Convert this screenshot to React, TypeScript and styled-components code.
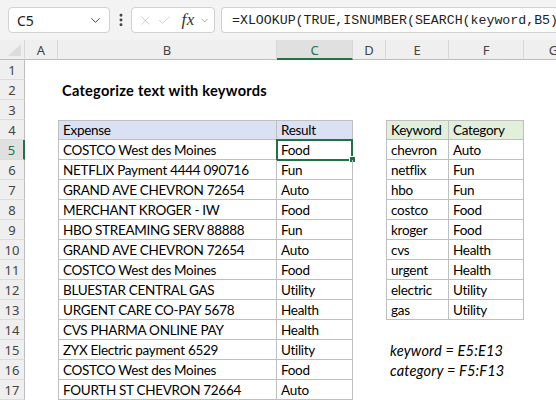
import React from "react";
import styled, { createGlobalStyle, css } from "styled-components";
import { ChevronDown, EllipsisVertical, X, Check } from "lucide-react";

const GlobalStyle = createGlobalStyle`
  html, body {
    margin: 0;
    padding: 0;
    background: #fff;
    overflow: hidden;
  }
  body {
    font-family: "Liberation Sans", Arial, sans-serif;
  }
`;

const GREEN = "#217346";

const Page = styled.div`
  width: 556px;
  height: 400px;
  overflow: hidden;
  display: flex;
  flex-direction: column;
  background: #fff;
`;

const Toolbar = styled.div`
  flex: none;
  height: 40px;
  box-sizing: border-box;
  padding: 7px 0 0 8px;
  display: flex;
  align-items: flex-start;
  background: #f3f3f3;
  overflow: hidden;
`;

const Box = styled.div<{ $width?: number }>`
  flex: none;
  height: 26px;
  box-sizing: border-box;
  width: ${(p) => (p.$width ? `${p.$width}px` : "auto")};
  background: #fff;
  border: 1px solid #d1d1d1;
  border-radius: 4px;
  display: flex;
  align-items: center;
`;

const NameBox = styled(Box)`
  padding: 0 6px 0 8px;
  justify-content: space-between;
  font-family: "Noto Sans", sans-serif;
  font-size: 14px;
  color: #222;
`;

const Dots = styled.div`
  flex: none;
  width: 21px;
  height: 26px;
  display: flex;
  align-items: center;
  justify-content: center;
  color: #444;
`;

const FxBox = styled(Box)`
  padding: 0 4px 0 6px;
  gap: 4px;
  color: #c4c4c4;
`;

const Fx = styled.span`
  font-family: "Liberation Serif", serif;
  font-style: italic;
  font-size: 17px;
  color: #333;
  margin-left: 6px;
  letter-spacing: 0.5px;
`;

const FormulaBox = styled(Box)`
  margin-left: 6px;
  flex: 1 0 auto;
  min-width: 400px;
  padding-left: 10px;
  font-family: "Liberation Mono", monospace;
  font-size: 13.25px;
  color: #222;
  white-space: nowrap;
  border-right: none;
  border-top-right-radius: 0;
  border-bottom-right-radius: 0;
`;

const Sheet = styled.div`
  display: grid;
  grid-template-columns: 25px 33px 219px 76px 33px 63px 75px 60px;
  grid-auto-rows: 20px;
`;

const Corner = styled.div`
  background: #efefef;
  border-bottom: 1px solid #bdbdbd;
  border-right: 1px solid #d8d8d8;
  box-sizing: border-box;
  position: relative;
  &::after {
    content: "";
    position: absolute;
    right: 3px;
    bottom: 3px;
    width: 0;
    height: 0;
    border-left: 13px solid transparent;
    border-bottom: 12px solid #dcdcdc;
  }
`;

const ColHead = styled.div<{ $active?: boolean }>`
  box-sizing: border-box;
  background: ${(p) => (p.$active ? "#e0e0e0" : "#efefef")};
  border-right: 1px solid #d8d8d8;
  border-bottom: ${(p) => (p.$active ? `2px solid ${GREEN}` : "1px solid #bdbdbd")};
  display: flex;
  align-items: center;
  justify-content: center;
  font-family: "Noto Sans", sans-serif;
  font-size: 13px;
  color: ${(p) => (p.$active ? GREEN : "#444")};
  padding-top: ${(p) => (p.$active ? "1px" : "0")};
`;

const RowHead = styled.div<{ $active?: boolean }>`
  box-sizing: border-box;
  background: ${(p) => (p.$active ? "#e0e0e0" : "#efefef")};
  border-right: ${(p) => (p.$active ? `2px solid ${GREEN}` : "1px solid #bdbdbd")};
  border-bottom: 1px solid #dcdcdc;
  display: flex;
  align-items: center;
  justify-content: center;
  font-family: "Noto Sans", sans-serif;
  font-size: 13px;
  color: ${(p) => (p.$active ? GREEN : "#444")};
`;

type Fill = "blue" | "green";

const Cell = styled.div<{
  $box?: boolean;
  $top?: boolean;
  $left?: boolean;
  $fill?: Fill;
  $bold?: boolean;
  $italic?: boolean;
  $selected?: boolean;
}>`
  box-sizing: border-box;
  position: relative;
  display: flex;
  align-items: flex-end;
  padding: 0 0 1px 4px;
  font-family: Lato, "Liberation Sans", sans-serif;
  font-size: 13.5px;
  letter-spacing: -0.3px;
  color: #000;
  white-space: nowrap;
  overflow: visible;
  background: ${(p) =>
    p.$fill === "blue" ? "#d9e1f2" : p.$fill === "green" ? "#e2efda" : "transparent"};
  ${(p) =>
    p.$bold &&
    css`
      font-weight: 700;
      font-size: 14.6px;
      letter-spacing: 0.25px;
    `}
  ${(p) =>
    p.$italic &&
    css`
      font-style: italic;
      font-size: 14.6px;
      letter-spacing: 0.15px;
    `}
  ${(p) =>
    p.$box &&
    css`
      border-right: 1px solid #bfbfbf;
      border-bottom: 1px solid #bfbfbf;
    `}
  ${(p) => p.$top && "border-top: 1px solid #bfbfbf;"}
  ${(p) => p.$left && "border-left: 1px solid #bfbfbf;"}
  ${(p) =>
    p.$selected &&
    css`
      &::before {
        content: "";
        position: absolute;
        left: -1px;
        top: -1px;
        right: -1px;
        bottom: -2px;
        border: 2px solid ${GREEN};
      }
      &::after {
        content: "";
        position: absolute;
        right: -4px;
        bottom: -4px;
        width: 5px;
        height: 5px;
        background: ${GREEN};
        border: 1px solid #fff;
      }
    `}
`;

const expenses: [string, string][] = [
  ["COSTCO West des Moines", "Food"],
  ["NETFLIX Payment 4444 090716", "Fun"],
  ["GRAND AVE CHEVRON 72654", "Auto"],
  ["MERCHANT KROGER - IW", "Food"],
  ["HBO STREAMING SERV 88888", "Fun"],
  ["GRAND AVE CHEVRON 72654", "Auto"],
  ["COSTCO West des Moines", "Food"],
  ["BLUESTAR CENTRAL GAS", "Utility"],
  ["URGENT CARE CO-PAY 5678", "Health"],
  ["CVS PHARMA ONLINE PAY", "Health"],
  ["ZYX Electric payment 6529", "Utility"],
  ["COSTCO West des Moines", "Food"],
  ["FOURTH ST CHEVRON 72664", "Auto"],
];

const keywords: [string, string][] = [
  ["chevron", "Auto"],
  ["netflix", "Fun"],
  ["hbo", "Fun"],
  ["costco", "Food"],
  ["kroger", "Food"],
  ["cvs", "Health"],
  ["urgent", "Health"],
  ["electric", "Utility"],
  ["gas", "Utility"],
];

const names: Record<number, string> = {
  15: "keyword = E5:E13",
  16: "category = F5:F13",
};

const columns = ["A", "B", "C", "D", "E", "F", "G"];

const renderRow = (r: number) => {
  const exp = r >= 5 ? expenses[r - 5] : undefined;
  const kw = r >= 5 ? keywords[r - 5] : undefined;
  const isHead = r === 4;
  const inMain = isHead || !!exp;
  const inKw = isHead || !!kw;

  return (
    <React.Fragment key={r}>
      <RowHead $active={r === 5}>{r}</RowHead>
      <Cell />
      {r === 2 ? (
        <Cell $bold>Categorize text with keywords</Cell>
      ) : (
        <Cell $box={inMain} $top={isHead} $left={inMain} $fill={isHead ? "blue" : undefined}>
          {isHead ? "Expense" : exp?.[0]}
        </Cell>
      )}
      <Cell $box={inMain} $top={isHead} $fill={isHead ? "blue" : undefined} $selected={r === 5}>
        {isHead ? "Result" : exp?.[1]}
      </Cell>
      <Cell />
      {names[r] ? (
        <Cell $italic>{names[r]}</Cell>
      ) : (
        <Cell $box={inKw} $top={isHead} $left={inKw} $fill={isHead ? "green" : undefined}>
          {isHead ? "Keyword" : kw?.[0]}
        </Cell>
      )}
      <Cell $box={inKw} $top={isHead} $fill={isHead ? "green" : undefined}>
        {isHead ? "Category" : kw?.[1]}
      </Cell>
      <Cell />
    </React.Fragment>
  );
};

export default function App() {
  const rows = Array.from({ length: 17 }, (_, i) => i + 1);
  return (
    <Page>
      <GlobalStyle />
      <Toolbar>
        <NameBox $width={102}>
          <span>C5</span>
          <ChevronDown size={15} color="#444" strokeWidth={1.6} />
        </NameBox>
        <Dots>
          <EllipsisVertical size={16} strokeWidth={2.4} />
        </Dots>
        <FxBox $width={84}>
          <X size={17} strokeWidth={1.3} />
          <Check size={17} strokeWidth={1.3} />
          <Fx>fx</Fx>
          <ChevronDown size={13} color="#888" strokeWidth={1.5} />
        </FxBox>
        <FormulaBox>=XLOOKUP(TRUE,ISNUMBER(SEARCH(keyword,B5)),category)</FormulaBox>
      </Toolbar>
      <Sheet>
        <Corner />
        {columns.map((c) => (
          <ColHead key={c} $active={c === "C"}>
            {c}
          </ColHead>
        ))}
        {rows.map(renderRow)}
      </Sheet>
    </Page>
  );
}
